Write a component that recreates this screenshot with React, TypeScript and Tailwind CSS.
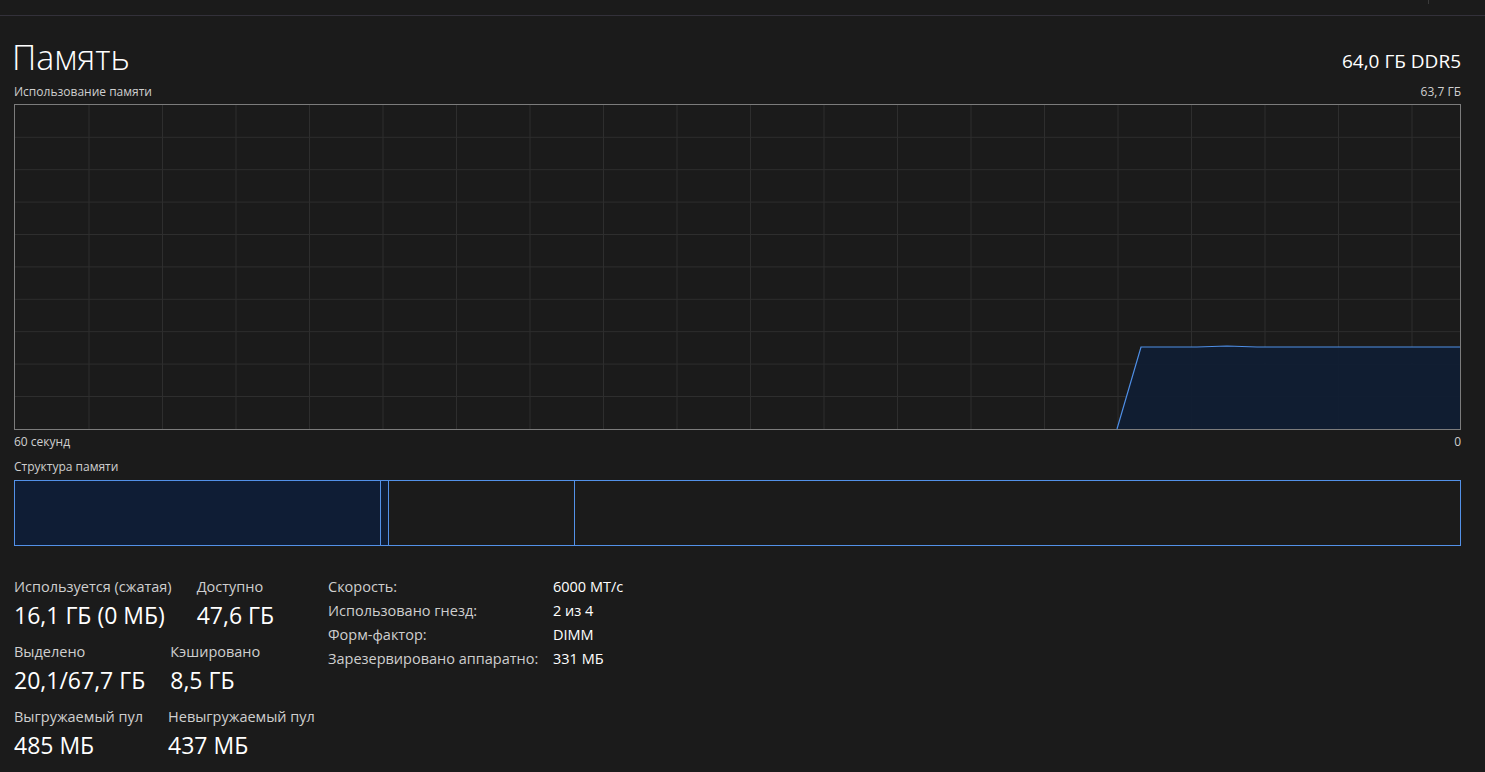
const W = 1445;
const H = 324;

const vLines = Array.from({ length: 20 }, (_, i) => 74 + i * 73.5).filter((x) => x < W);
const hLines = Array.from({ length: 9 }, (_, i) => 32.3 + i * 32.4);

const areaPath = `M1102 ${H} L1126 242 L1182 242 L1212 241 L1242 242 L${W} 242 L${W} ${H} Z`;
const linePath = `M1102 ${H} L1126 242 L1182 242 L1212 241 L1242 242 L${W} 242`;

function UsageChart() {
  return (
    <div className="w-[1447px] h-[326px] border border-[#7c7c7c]">
      <svg width={W} height={H} className="block">
        {vLines.map((x) => (
          <line key={x} x1={x} y1={0} x2={x} y2={H} stroke="#2e2e2e" strokeWidth={1} />
        ))}
        {hLines.map((y) => (
          <line key={y} x1={0} y1={y} x2={W} y2={y} stroke="#2e2e2e" strokeWidth={1} />
        ))}
        <path d={areaPath} fill="#0f1d33" fillOpacity={0.92} />
        <path d={linePath} fill="none" stroke="#4f8fe6" strokeWidth={1.2} />
      </svg>
    </div>
  );
}

function Stat({ label, value }: { label: string; value: string }) {
  return (
    <div className="flex flex-col">
      <span className="text-[14.5px] leading-[19px] text-[#cfcfcf]">{label}</span>
      <span className="text-[23px] leading-[30px] text-white mt-[4px]">{value}</span>
    </div>
  );
}

const specs = [
  ["Скорость:", "6000 МТ/с"],
  ["Использовано гнезд:", "2 из 4"],
  ["Форм-фактор:", "DIMM"],
  ["Зарезервировано аппаратно:", "331 МБ"],
];

export default function App() {
  return (
    <div
      className="h-screen w-full bg-[#1b1b1b] text-white overflow-hidden"
      style={{ fontFamily: '"Segoe UI", "Open Sans", "Noto Sans", sans-serif' }}
    >
      <div className="relative h-[16px] border-b border-[#33313a]">
        <div className="absolute left-[1428px] top-0 h-[4px] w-px bg-[#3a3a3a]" />
      </div>

      <div className="pl-[14px] pr-[24px]">
        <div className="flex items-end justify-between w-[1447px] mt-[19px]">
          <h1 className="text-[34px] leading-[44px] font-light text-white -ml-[2px]">Память</h1>
          <span className="text-[19px] leading-[28px] text-white mb-[4px]">64,0 ГБ DDR5</span>
        </div>

        <div className="flex justify-between w-[1447px] mt-[5px] text-[12px] leading-[16px] text-[#cfcfcf]">
          <span>Использование памяти</span>
          <span>63,7 ГБ</span>
        </div>

        <div className="mt-[4px]">
          <UsageChart />
        </div>

        <div className="flex justify-between w-[1447px] mt-[4px] text-[12px] leading-[16px] text-[#cfcfcf]">
          <span>60 секунд</span>
          <span>0</span>
        </div>

        <div className="mt-[9px] text-[12px] leading-[16px] text-[#cfcfcf]">Структура памяти</div>

        <div className="mt-[5px] flex w-[1447px] h-[66px] border border-[#5391e8]">
          <div className="w-[366px] bg-[#0f1d35] border-r border-[#5391e8]" />
          <div className="w-[8px] bg-[#0f1d35] border-r border-[#5391e8]" />
          <div className="w-[186px] border-r border-[#5391e8]" />
          <div className="flex-1" />
        </div>

        <div className="flex mt-[31px]">
          <div className="w-[314px] flex flex-col gap-[12px]">
            <div className="flex gap-[25px]">
              <Stat label="Используется (сжатая)" value="16,1 ГБ (0 МБ)" />
              <Stat label="Доступно" value="47,6 ГБ" />
            </div>
            <div className="flex gap-[25px]">
              <Stat label="Выделено" value="20,1/67,7 ГБ" />
              <Stat label="Кэшировано" value="8,5 ГБ" />
            </div>
            <div className="flex gap-[25px]">
              <Stat label="Выгружаемый пул" value="485 МБ" />
              <Stat label="Невыгружаемый пул" value="437 МБ" />
            </div>
          </div>

          <div className="grid grid-cols-[225px_auto] auto-rows-[24px] text-[14.5px] leading-[19px]">
            {specs.map(([k, v]) => (
              <div key={k} className="contents">
                <span className="text-[#cfcfcf]">{k}</span>
                <span className="text-white">{v}</span>
              </div>
            ))}
          </div>
        </div>
      </div>
    </div>
  );
}
